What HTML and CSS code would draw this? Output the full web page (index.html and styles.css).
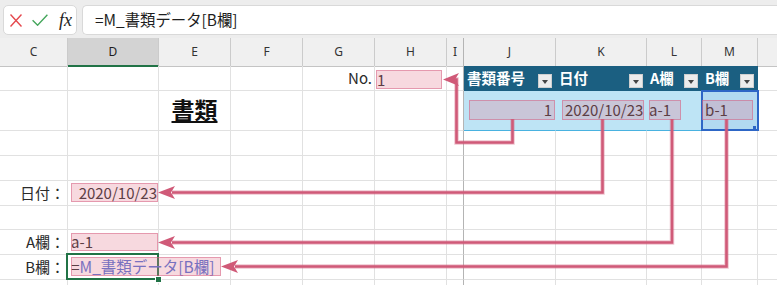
FILE: index.html
```html
<!DOCTYPE html>
<html lang="ja">
<head>
<meta charset="utf-8">
<title>書類</title>
<link rel="stylesheet" href="styles.css">
</head>
<body>
<div class="app">
  <div class="fbar">
    <div class="fbtns">
      <svg class="ic-x" width="12" height="13" viewBox="0 0 12 13"><path d="M0.5 0.5L11.5 12.5M11.5 0.5L0.5 12.5" stroke="#e5484d" stroke-width="1.4" fill="none"/></svg>
      <svg class="ic-ok" width="16" height="12" viewBox="0 0 16 12"><path d="M0.6 6.2L5.6 11.2L15.4 0.8" stroke="#44a65b" stroke-width="1.4" fill="none"/></svg>
      <span class="fx">fx</span>
    </div>
    <div class="finput">=M_書類データ[B欄]</div>
  </div>

  <div class="sheet">
    <div class="row hdr">
      <div>C</div><div class="sel">D</div><div>E</div><div>F</div><div>G</div><div>H</div><div>I</div><div>J</div><div>K</div><div>L</div><div>M</div><div></div>
    </div>
    <div class="row h25">
      <div></div><div></div><div></div><div></div>
      <div class="lbl">No.</div>
      <div><div class="pk pk-no">1</div></div>
      <div></div>
      <div class="th"><span>書類番号</span><span class="dd"></span></div>
      <div class="th"><span>日付</span><span class="dd"></span></div>
      <div class="th"><span>A欄</span><span class="dd"></span></div>
      <div class="th"><span>B欄</span><span class="dd"></span></div>
      <div></div>
    </div>
    <div class="row h40">
      <div></div><div></div>
      <div class="title">書類</div>
      <div></div><div></div><div></div><div></div>
      <div class="td"><div class="pk pk-tbl pk-j">1</div></div>
      <div class="td"><div class="pk pk-tbl pk-k">2020/10/23</div></div>
      <div class="td"><div class="pk pk-tbl pk-l">a-1</div></div>
      <div class="td ref"><div class="pk pk-tbl pk-m">b-1</div></div>
      <div></div>
    </div>
    <div class="row h25">
      <div></div><div></div><div></div><div></div><div></div><div></div><div></div><div></div><div></div><div></div><div></div><div></div>
    </div>
    <div class="row h25">
      <div></div><div></div><div></div><div></div><div></div><div></div><div></div><div></div><div></div><div></div><div></div><div></div>
    </div>
    <div class="row h25">
      <div class="lbl">日付：</div>
      <div><div class="pk pk-d pk-date">2020/10/23</div></div>
      <div></div><div></div><div></div><div></div><div></div><div></div><div></div><div></div><div></div><div></div>
    </div>
    <div class="row h24">
      <div></div><div></div><div></div><div></div><div></div><div></div><div></div><div></div><div></div><div></div><div></div><div></div>
    </div>
    <div class="row h25">
      <div class="lbl">A欄：</div>
      <div><div class="pk pk-d pk-a">a-1</div></div>
      <div></div><div></div><div></div><div></div><div></div><div></div><div></div><div></div><div></div><div></div>
    </div>
    <div class="row h25">
      <div class="lbl">B欄：</div>
      <div class="active"><div class="pk pk-d pk-f"><span class="eq">=</span><span class="refc">M_書類データ[B欄]</span></div></div>
      <div></div><div></div><div></div><div></div><div></div><div></div><div></div><div></div><div></div><div></div>
    </div>
    <div class="row h20">
      <div></div><div></div><div></div><div></div><div></div><div></div><div></div><div></div><div></div><div></div><div></div><div></div>
    </div>
  </div>

  <svg class="arrows" width="777" height="285" viewBox="0 0 777 285">
    <g fill="none" stroke="rgba(208,90,120,0.35)" stroke-width="4.5">
      <path d="M512.5 119V142.5H456.5V79.5H454"/>
      <path d="M602.5 119V192.5H172"/>
      <path d="M672 119V242.5H172"/>
      <path d="M726.5 119V266.5H235"/>
    </g>
    <g fill="none" stroke="#d05a78" stroke-width="2.6">
      <path d="M512.5 119V142.5H456.5V79.5H454"/>
      <path d="M602.5 119V192.5H172"/>
      <path d="M672 119V242.5H172"/>
      <path d="M726.5 119V266.5H235"/>
    </g>
    <g fill="#d05a78">
      <polygon points="443,79.5 459,73 455,79.5 459,86"/>
      <polygon points="158,192.5 175,186 171,192.5 175,199"/>
      <polygon points="158,242.5 175,236 171,242.5 175,249"/>
      <polygon points="221,266.5 238,260 234,266.5 238,273"/>
    </g>
  </svg>
</div>
</body>
</html>
```
FILE: styles.css
```css
html, body {
  margin: 0;
  padding: 0;
}
body {
  width: 777px;
  height: 285px;
  overflow: hidden;
  background: #fff;
  font-family: "Noto Sans CJK JP", "Noto Sans", sans-serif;
  color: #222;
}
.app {
  position: relative;
  width: 777px;
  height: 285px;
  overflow: hidden;
}

/* formula bar */
.fbar {
  display: flex;
  gap: 5px;
  height: 38px;
  box-sizing: border-box;
  padding: 5px 0 0 3px;
  background: #ededed;
}
.fbtns {
  width: 74px;
  height: 30px;
  box-sizing: border-box;
  background: #fff;
  border: 1px solid #d9d9d9;
  border-radius: 5px;
  display: flex;
  align-items: center;
  padding-left: 6px;
}
.ic-ok {
  margin-left: 10px;
}
.fx {
  margin-left: 11px;
  font-family: "Liberation Serif", serif;
  font-style: italic;
  font-size: 18px;
  color: #222;
  line-height: 1;
}
.finput {
  flex: 1;
  height: 30px;
  box-sizing: border-box;
  background: #fff;
  border: 1px solid #d9d9d9;
  border-right: none;
  border-radius: 5px 0 0 5px;
  padding-left: 12px;
  font-size: 15.4px;
  line-height: 27px;
  color: #1e1e1e;
}

/* sheet grid */
.row {
  display: grid;
  grid-template-columns: 68px 91px 72px 72px 72px 72px 17px 92px 91px 55px 56px 1fr;
}
.row > div {
  box-sizing: border-box;
  min-width: 0;
  border-right: 1px solid #e1e1e1;
  border-bottom: 1px solid #e1e1e1;
}
.row > div:nth-child(7) {
  border-right-color: #b4b4b4;
}
.row > div:last-child {
  border-right: none;
}
.h25 { height: 25px; }
.h24 { height: 24px; }
.h40 { height: 40px; }
.h20 { height: 20px; }

.hdr {
  height: 28px;
  background: #f0f0f0;
}
.hdr > div {
  border-right-color: #cbcbcb;
  border-bottom-color: #c4c4c4;
  text-align: center;
  font-family: "Noto Sans", sans-serif;
  font-size: 12px;
  line-height: 27px;
  color: #333;
}
.hdr > .sel {
  background: #d3d3d3;
  border-bottom: 2px solid #217346;
  color: #1d1d1d;
}

.lbl {
  text-align: right;
  padding-right: 2px;
  font-size: 15px;
  line-height: 24px;
  color: #2a2a2a;
}

.title {
  text-align: center;
  font-size: 23px;
  font-weight: bold;
  line-height: 36px;
  text-decoration: underline;
  text-underline-offset: 2px;
  color: #111;
}

/* excel table */
.row > .th {
  background: #1b5f81;
  border-right-color: #1b5f81;
  border-bottom-color: #1b5f81;
  display: flex;
  justify-content: space-between;
  padding-left: 3px;
  color: #fff;
  font-weight: bold;
  font-size: 14.5px;
  line-height: 23px;
}
.dd {
  align-self: flex-end;
  width: 14px;
  height: 14px;
  box-sizing: border-box;
  margin: 0 3px 2px 0;
  background: #ececec;
  border: 1px solid #cfcfcf;
  display: flex;
  align-items: center;
  justify-content: center;
}
.dd::after {
  content: "";
  border-left: 3.5px solid transparent;
  border-right: 3.5px solid transparent;
  border-top: 4px solid #454545;
  margin-top: 2px;
}
.row > .td {
  background: #bee4f5;
  border-right-color: #bee4f5;
  border-bottom-color: #49b2e0;
}
.row > .ref {
  position: relative;
  background: #b2daf1;
  border-right-color: #b2daf1;
}
.ref::before {
  content: "";
  position: absolute;
  left: -1px;
  top: -1px;
  right: -2px;
  bottom: -1px;
  border: 2px solid #2d66c6;
}
.ref::after {
  content: "";
  position: absolute;
  right: 1px;
  bottom: 1px;
  width: 3px;
  height: 3px;
  background: #2d66c6;
}

/* active cell */
.active {
  position: relative;
}
.active::before {
  content: "";
  position: absolute;
  left: -2px;
  top: -2px;
  right: -1px;
  bottom: -1px;
  border: 2px solid #217346;
}
.active::after {
  content: "";
  position: absolute;
  right: -4px;
  bottom: -4px;
  width: 5px;
  height: 5px;
  background: #217346;
  border: 1px solid #fff;
}

/* pink highlight shapes */
.pk {
  position: relative;
  box-sizing: border-box;
  height: 19px;
  line-height: 19px;
  font-size: 15px;
  white-space: nowrap;
  color: #222;
}
.pk::after {
  content: "";
  position: absolute;
  left: 0;
  top: 0;
  right: 0;
  bottom: 0;
  background: rgba(229, 128, 150, 0.3);
  border: 1px solid rgba(212, 90, 125, 0.5);
}
.pk-no {
  margin: 4px 0 0 1px;
  width: 66px;
  padding-left: 1px;
}
.pk-tbl {
  margin-top: 9px;
  height: 20px;
  line-height: 20px;
}
.pk-j {
  margin-left: 5px;
  width: 86px;
  text-align: right;
  padding-right: 3px;
}
.pk-k {
  margin-left: 6px;
  width: 82px;
  padding-left: 3px;
}
.pk-l {
  margin-left: 2px;
  width: 32px;
}
.pk-m {
  width: 51px;
  padding-left: 3px;
}
.pk-d {
  margin: 2px 0 0 3px;
  width: 87px;
}
.pk-date {
  text-align: right;
  padding-right: 1px;
}
.pk-a {
  margin-top: 3px;
  height: 18px;
  line-height: 18px;
}
.pk-f {
  width: 150px;
  font-size: 15.5px;
}
.eq {
  color: #222;
}
.refc {
  color: #4a6ad2;
}

/* arrows overlay */
.arrows {
  position: absolute;
  left: 0;
  top: 0;
  pointer-events: none;
}
```
